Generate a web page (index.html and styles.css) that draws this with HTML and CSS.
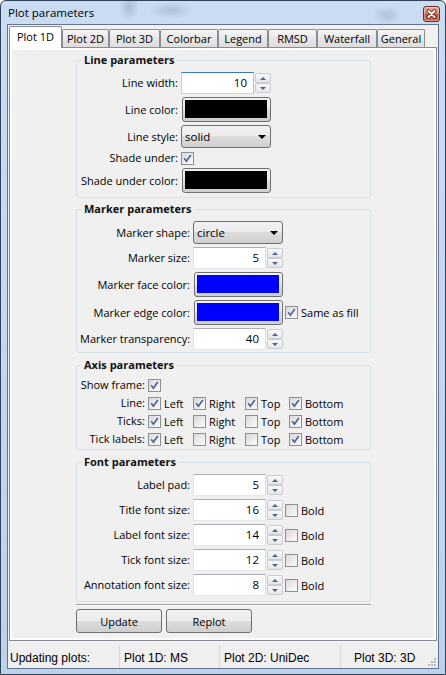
FILE: index.html
```html
<!DOCTYPE html>
<html>
<head>
<meta charset="utf-8">
<title>Plot parameters</title>
<link rel="stylesheet" href="styles.css">
</head>
<body>
<div class="window">
  <div class="titlebar">
    <span class="title">Plot parameters</span>
    <span class="close"><svg width="15" height="14" viewBox="0 0 15 14"><path d="M4.5 4 L10.5 10 M10.5 4 L4.5 10" stroke="#6a2418" stroke-width="3.6" stroke-linecap="round"/><path d="M4.5 4 L10.5 10 M10.5 4 L4.5 10" stroke="#fff" stroke-width="1.8" stroke-linecap="round"/></svg></span>
  </div>
  <div class="client">
    <div class="tabs">
      <div class="tab sel">Plot 1D</div>
      <div class="tab t2d">Plot 2D</div>
      <div class="tab t3d">Plot 3D</div>
      <div class="tab tcb">Colorbar</div>
      <div class="tab tlg">Legend</div>
      <div class="tab trm">RMSD</div>
      <div class="tab twf">Waterfall</div>
      <div class="tab tgn">General</div>
    </div>
    <div class="panel">
      <div class="page">
        <section class="box b1">
          <div class="box-title">Line parameters</div>
          <div class="rows">
            <div class="row h22"><span class="lbl">Line width:</span><div class="ctl"><div class="input focus">10</div><div class="spin"><i class="up"></i><i class="dn"></i></div></div></div>
            <div class="row h25"><span class="lbl">Line color:</span><div class="ctl"><div class="colorbtn"><span class="swatch black"></span></div></div></div>
            <div class="row h23"><span class="lbl">Line style:</span><div class="ctl"><div class="combo"><span>solid</span><i class="arrow"></i></div></div></div>
            <div class="row h14"><span class="lbl">Shade under:</span><div class="ctl"><span class="cb"><svg viewBox="0 0 11 11" width="11" height="11"><path d="M2.2 5.2 L4.4 8.2 L8.8 2" fill="none" stroke="#4b5f98" stroke-width="1.6"/></svg></span></div></div>
            <div class="row h25"><span class="lbl">Shade under color:</span><div class="ctl"><div class="colorbtn"><span class="swatch black"></span></div></div></div>
          </div>
        </section>

        <section class="box b2">
          <div class="box-title">Marker parameters</div>
          <div class="rows">
            <div class="row h23"><span class="lbl">Marker shape:</span><div class="ctl"><div class="combo"><span>circle</span><i class="arrow"></i></div></div></div>
            <div class="row h22"><span class="lbl">Marker size:</span><div class="ctl"><div class="input">5</div><div class="spin"><i class="up"></i><i class="dn"></i></div></div></div>
            <div class="row h25"><span class="lbl">Marker face color:</span><div class="ctl"><div class="colorbtn"><span class="swatch blue"></span></div></div></div>
            <div class="row h25"><span class="lbl">Marker edge color:</span><div class="ctl"><div class="colorbtn"><span class="swatch blue"></span></div><span class="opt after"><span class="cb"><svg viewBox="0 0 11 11" width="11" height="11"><path d="M2.2 5.2 L4.4 8.2 L8.8 2" fill="none" stroke="#4b5f98" stroke-width="1.6"/></svg></span><span>Same as fill</span></span></div></div>
            <div class="row h22"><span class="lbl">Marker transparency:</span><div class="ctl"><div class="input">40</div><div class="spin"><i class="up"></i><i class="dn"></i></div></div></div>
          </div>
        </section>

        <section class="box b3">
          <div class="box-title">Axis parameters</div>
          <div class="rows">
            <div class="row h18"><span class="lbl">Show frame:</span><div class="ctl"><span class="cb"><svg viewBox="0 0 11 11" width="11" height="11"><path d="M2.2 5.2 L4.4 8.2 L8.8 2" fill="none" stroke="#4b5f98" stroke-width="1.6"/></svg></span></div></div>
            <div class="row h18"><span class="lbl">Line:</span>
              <div class="opts">
                <span class="opt"><span class="cb"><svg viewBox="0 0 11 11" width="11" height="11"><path d="M2.2 5.2 L4.4 8.2 L8.8 2" fill="none" stroke="#4b5f98" stroke-width="1.6"/></svg></span><span>Left</span></span>
                <span class="opt"><span class="cb"><svg viewBox="0 0 11 11" width="11" height="11"><path d="M2.2 5.2 L4.4 8.2 L8.8 2" fill="none" stroke="#4b5f98" stroke-width="1.6"/></svg></span><span>Right</span></span>
                <span class="opt"><span class="cb"><svg viewBox="0 0 11 11" width="11" height="11"><path d="M2.2 5.2 L4.4 8.2 L8.8 2" fill="none" stroke="#4b5f98" stroke-width="1.6"/></svg></span><span>Top</span></span>
                <span class="opt"><span class="cb"><svg viewBox="0 0 11 11" width="11" height="11"><path d="M2.2 5.2 L4.4 8.2 L8.8 2" fill="none" stroke="#4b5f98" stroke-width="1.6"/></svg></span><span>Bottom</span></span>
              </div>
            </div>
            <div class="row h18"><span class="lbl">Ticks:</span>
              <div class="opts">
                <span class="opt"><span class="cb"><svg viewBox="0 0 11 11" width="11" height="11"><path d="M2.2 5.2 L4.4 8.2 L8.8 2" fill="none" stroke="#4b5f98" stroke-width="1.6"/></svg></span><span>Left</span></span>
                <span class="opt"><span class="cb"></span><span>Right</span></span>
                <span class="opt"><span class="cb"></span><span>Top</span></span>
                <span class="opt"><span class="cb"><svg viewBox="0 0 11 11" width="11" height="11"><path d="M2.2 5.2 L4.4 8.2 L8.8 2" fill="none" stroke="#4b5f98" stroke-width="1.6"/></svg></span><span>Bottom</span></span>
              </div>
            </div>
            <div class="row h18"><span class="lbl">Tick labels:</span>
              <div class="opts">
                <span class="opt"><span class="cb"><svg viewBox="0 0 11 11" width="11" height="11"><path d="M2.2 5.2 L4.4 8.2 L8.8 2" fill="none" stroke="#4b5f98" stroke-width="1.6"/></svg></span><span>Left</span></span>
                <span class="opt"><span class="cb"></span><span>Right</span></span>
                <span class="opt"><span class="cb"></span><span>Top</span></span>
                <span class="opt"><span class="cb"><svg viewBox="0 0 11 11" width="11" height="11"><path d="M2.2 5.2 L4.4 8.2 L8.8 2" fill="none" stroke="#4b5f98" stroke-width="1.6"/></svg></span><span>Bottom</span></span>
              </div>
            </div>
          </div>
        </section>

        <section class="box b4">
          <div class="box-title">Font parameters</div>
          <div class="rows">
            <div class="row h22"><span class="lbl">Label pad:</span><div class="ctl"><div class="input">5</div><div class="spin"><i class="up"></i><i class="dn"></i></div></div></div>
            <div class="row h22"><span class="lbl">Title font size:</span><div class="ctl"><div class="input">16</div><div class="spin"><i class="up"></i><i class="dn"></i></div><span class="opt bold"><span class="cb"></span><span>Bold</span></span></div></div>
            <div class="row h22"><span class="lbl">Label font size:</span><div class="ctl"><div class="input">14</div><div class="spin"><i class="up"></i><i class="dn"></i></div><span class="opt bold"><span class="cb"></span><span>Bold</span></span></div></div>
            <div class="row h22"><span class="lbl">Tick font size:</span><div class="ctl"><div class="input">12</div><div class="spin"><i class="up"></i><i class="dn"></i></div><span class="opt bold"><span class="cb"></span><span>Bold</span></span></div></div>
            <div class="row h22"><span class="lbl">Annotation font size:</span><div class="ctl"><div class="input">8</div><div class="spin"><i class="up"></i><i class="dn"></i></div><span class="opt bold"><span class="cb"></span><span>Bold</span></span></div></div>
          </div>
        </section>

        <div class="sep"></div>
        <div class="buttons">
          <div class="btn">Update</div>
          <div class="btn">Replot</div>
        </div>
      </div>
    </div>
    <div class="status">
      <div class="sf f1">Updating plots:</div>
      <div class="sf f2">Plot 1D: MS</div>
      <div class="sf f3">Plot 2D: UniDec</div>
      <div class="sf f4"><span>Plot 3D: 3D</span>
        <svg class="grip" width="9" height="9" viewBox="0 0 9 9"><g fill="#b9b9b9"><rect x="6" y="0" width="2" height="2"/><rect x="3" y="3" width="2" height="2"/><rect x="6" y="3" width="2" height="2"/><rect x="0" y="6" width="2" height="2"/><rect x="3" y="6" width="2" height="2"/><rect x="6" y="6" width="2" height="2"/></g></svg>
      </div>
    </div>
  </div>
</div>
</body>
</html>
```

FILE: styles.css
```css
* { box-sizing: border-box; }
html, body { margin: 0; padding: 0; }
body {
  width: 446px;
  height: 675px;
  overflow: hidden;
  background: #ffffff;
  font-family: "Open Sans", "Noto Sans", sans-serif;
  font-size: 11px;
  color: #000;
}

.window {
  width: 446px;
  height: 675px;
  display: flex;
  flex-direction: column;
  padding: 0 6px 5px 6px;
  border: 1px solid #2f4259;
  border-radius: 6px 6px 0 0;
  background:
    radial-gradient(ellipse 10px 14px at 128px 6px, rgba(110,130,160,.35), transparent),
    radial-gradient(ellipse 22px 9px at 170px 9px, rgba(110,130,160,.3), transparent),
    radial-gradient(ellipse 14px 10px at 386px 14px, rgba(110,130,160,.28), transparent),
    linear-gradient(#cadcf2, #bcd2ec);
}

.titlebar {
  height: 23px;
  flex: none;
  display: flex;
  align-items: flex-start;
  padding-left: 1px;
}
.title {
  flex: 1;
  line-height: 16px;
  padding-top: 4px;
  font-size: 11.5px;
  color: #000;
}
.close {
  width: 17px;
  height: 16px;
  margin: 5px -1px 0 0;
  border: 1px solid #6b2a1f;
  border-radius: 3px;
  background: linear-gradient(#eab0a2, #d9806a 45%, #c44a33 55%, #d26a50);
  display: flex;
  align-items: center;
  justify-content: center;
  box-shadow: inset 0 0 0 1px rgba(255,255,255,.35);
}

.client {
  flex: 1;
  display: flex;
  flex-direction: column;
  border: 1px solid #62758d;
  background: #f0f0f0;
}

.tabs {
  flex: none;
  height: 22px;
  margin-top: 1px;
  padding-left: 1px;
  display: flex;
  align-items: flex-end;
  position: relative;
  z-index: 2;
}
.tab {
  height: 18px;
  margin-bottom: 1px;
  border: 1px solid #898c95;
  border-bottom: none;
  border-radius: 2px 2px 0 0;
  background: linear-gradient(#f5f5f5, #e8e8e8 45%, #dddddd);
  text-align: center;
  line-height: 16px;
  padding-top: 1px;
  white-space: nowrap;
}
.tab.sel {
  width: 53px;
  height: 22px;
  margin-bottom: 0;
  background: #ffffff;
  padding-top: 2px;
}
.t2d { width: 47px; }
.t3d { width: 51px; }
.tcb { width: 58px; }
.tlg { width: 50px; }
.trm { width: 49px; }
.twf { width: 60px; }
.tgn { width: 48px; }

.panel {
  flex: none;
  height: 594px;
  margin: -1px 1px 0 1px;
  border: 1px solid #898c95;
  background: #fcfcfc;
  padding: 2px;
  position: relative;
  z-index: 1;
}
.page {
  height: 100%;
  background: #f0f0f0;
  padding: 0 0 0 64px;
  display: flow-root;
}

.box {
  width: 295px;
  border: 1px solid #d5dfe5;
  border-radius: 3px;
  padding: 0 3px;
}
.box-title {
  width: fit-content;
  margin: -9px 0 0 2px;
  padding: 0 2px;
  line-height: 16px;
  font-weight: 700;
  color: #111;
  background: #f0f0f0;
}
.b1 { --lw: 98px; margin-top: 10px; }
.b2 { --lw: 110px; margin-top: 11px; }
.b3 { --lw: 65px; margin-top: 12px; }
.b4 { --lw: 110px; margin-top: 12px; }

.rows {
  display: flex;
  flex-direction: column;
  gap: 3px;
}
.b1 .rows { padding: 4px 0 4px; }
.b2 .rows { padding: 4px 0 2px; }
.b3 .rows { padding: 3px 0 1px; gap: 0; }
.b4 .rows { padding: 4px 0 5px; }

.row {
  display: grid;
  grid-template-columns: var(--lw) auto;
  column-gap: 3px;
  align-items: center;
}
.h14 { height: 14px; }
.h18 { height: 18px; }
.h22 { height: 22px; }
.h23 { height: 23px; }
.h25 { height: 25px; }

.lbl {
  text-align: right;
  white-space: nowrap;
  line-height: 14px;
}
.ctl {
  display: flex;
  align-items: center;
}

.input {
  width: 73px;
  height: 22px;
  background: #fff;
  border: 1px solid;
  border-color: #abadb3 #dbdfe6 #e3e9ef #e2e3ea;
  text-align: right;
  padding-right: 6px;
  line-height: 20px;
  font-size: 11.5px;
}
.input.focus {
  border-color: #3d7bad #a4c9e3 #b7d9ed #b5cfe7;
}

.spin {
  width: 16px;
  height: 20px;
  margin-left: 1px;
  display: flex;
  flex-direction: column;
  justify-content: space-between;
}
.spin i {
  height: 10px;
  border: 1px solid #c9cdd3;
  border-radius: 2px;
  background: linear-gradient(#fafafa, #e6e6e6);
  display: flex;
  align-items: center;
  justify-content: center;
}
.spin i::after {
  content: "";
  border-left: 3px solid transparent;
  border-right: 3px solid transparent;
}
.spin .up::after { border-bottom: 3px solid #4f6489; }
.spin .dn::after { border-top: 3px solid #4f6489; }

.colorbtn {
  width: 89px;
  height: 25px;
  margin-left: 1px;
  border: 1px solid #707070;
  border-radius: 3px;
  background: linear-gradient(#f2f2f2, #ebebeb 50%, #dddddd 50%, #cfcfcf);
  padding: 2px 3px 3px 2px;
  display: flex;
}
.swatch { flex: 1; }
.swatch.black { background: #000; }
.swatch.blue { background: #0000ff; }

.combo {
  width: 90px;
  height: 23px;
  border: 1px solid #707070;
  border-radius: 3px;
  background: linear-gradient(#f2f2f2, #ebebeb 50%, #dddddd 50%, #cfcfcf);
  display: flex;
  align-items: center;
  justify-content: space-between;
  padding: 0 4px 0 3px;
  font-size: 11.5px;
}
.arrow {
  width: 0;
  height: 0;
  border-left: 4px solid transparent;
  border-right: 4px solid transparent;
  border-top: 4px solid #000;
}

.cb {
  width: 13px;
  height: 13px;
  flex: none;
  border: 1px solid #8e8f8f;
  background: linear-gradient(135deg, #d9d9d9, #fcfcfc);
  display: flex;
}
.cb svg { display: block; }

.opts {
  display: grid;
  grid-template-columns: 45px 52px 44px auto;
  align-items: center;
}
.opt {
  display: flex;
  align-items: center;
  gap: 3px;
  white-space: nowrap;
}
.opt.after { margin-left: 2px; }
.opt.bold { margin-left: 2px; }

.sep {
  width: 295px;
  height: 2px;
  margin-top: 2px;
  border-top: 1px solid #a0a0a0;
  border-bottom: 1px solid #ffffff;
}
.buttons {
  margin-top: 3px;
  display: flex;
  gap: 4px;
}
.btn {
  width: 86px;
  height: 24px;
  border: 1px solid #707070;
  border-radius: 3px;
  background: linear-gradient(#f2f2f2, #ebebeb 50%, #dddddd 50%, #cfcfcf);
  display: flex;
  align-items: center;
  justify-content: center;
}

.status {
  flex: none;
  height: 25px;
  margin-top: 2px;
  display: flex;
  font-family: "Liberation Sans", Arial, sans-serif;
  font-size: 12px;
  color: #000;
  background: #f0efef;
}
.sf {
  margin: 2px 0 0 0;
  padding-top: 2px;
  border-right: 1px solid #d7d7d7;
  display: flex;
  align-items: center;
  white-space: nowrap;
}
.f1 { width: 112px; padding-left: 2px; }
.f2 { width: 100px; padding-left: 4px; }
.f3 { width: 121px; padding-left: 4px; }
.f4 { flex: 1; padding-left: 13px; border-right: none; }
.grip {
  margin-left: auto;
  margin-right: 1px;
  align-self: flex-end;
  margin-bottom: 1px;
}
```
